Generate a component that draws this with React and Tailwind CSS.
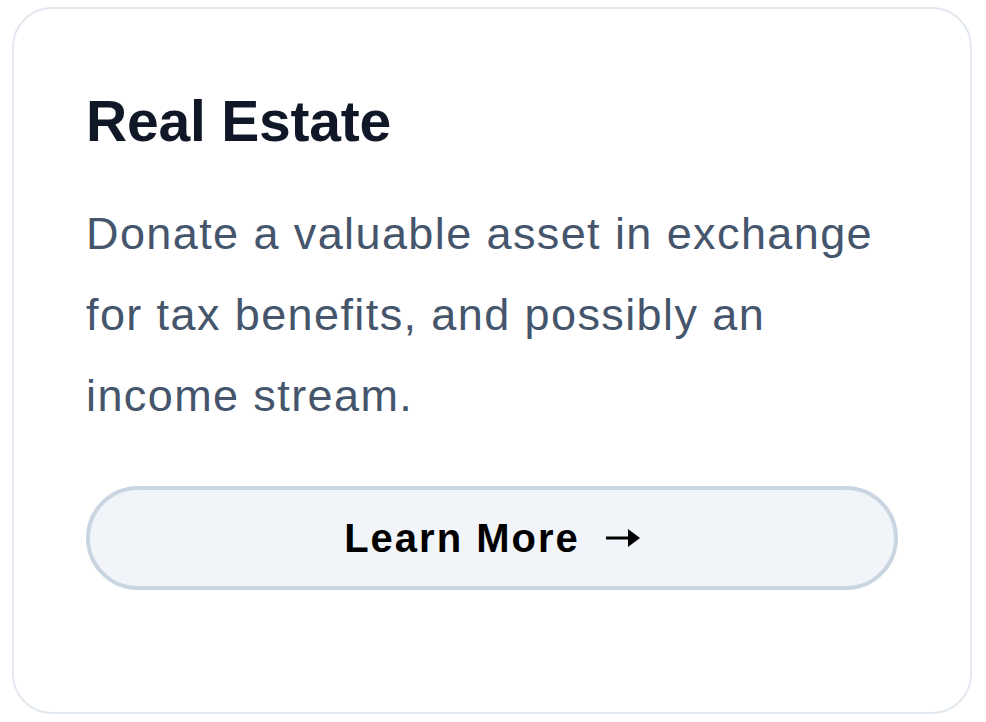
export default function App() {
  return (
    <div className="min-h-screen bg-white pl-[12px] pt-[7px]" style={{ fontFamily: '"Liberation Sans", Arial, sans-serif' }}>
      <div className="w-[960px] h-[707px] rounded-[40px] border-2 border-slate-200 bg-white px-[72px] pt-[78px]">
        {/* Заголовок */}
        <h2 className="text-[57px] leading-[1.2] font-bold tracking-[-0.2px] text-gray-900">Real Estate</h2>

        {/* Описание */}
        <p className="mt-[38px] text-[45px] leading-[81px] tracking-[1.4px] text-slate-600">
          Donate a valuable asset in exchange for tax benefits, and possibly an income stream.
        </p>

        {/* Кнопка */}
        <button
          type="button"
          className="mt-[50px] flex h-[104px] w-full items-center justify-center rounded-full border-4 border-slate-300 bg-slate-100 text-black"
        >
          <span className="text-[40px] font-bold tracking-wider">Learn More</span>
          <svg className="ml-[26px] h-[18px] w-[34px]" viewBox="0 0 34 18" fill="currentColor">
            <rect x="0" y="7.5" width="25" height="3" />
            <path d="M22 0 L34 9 L22 18 Z" />
          </svg>
        </button>
      </div>
    </div>
  );
}
